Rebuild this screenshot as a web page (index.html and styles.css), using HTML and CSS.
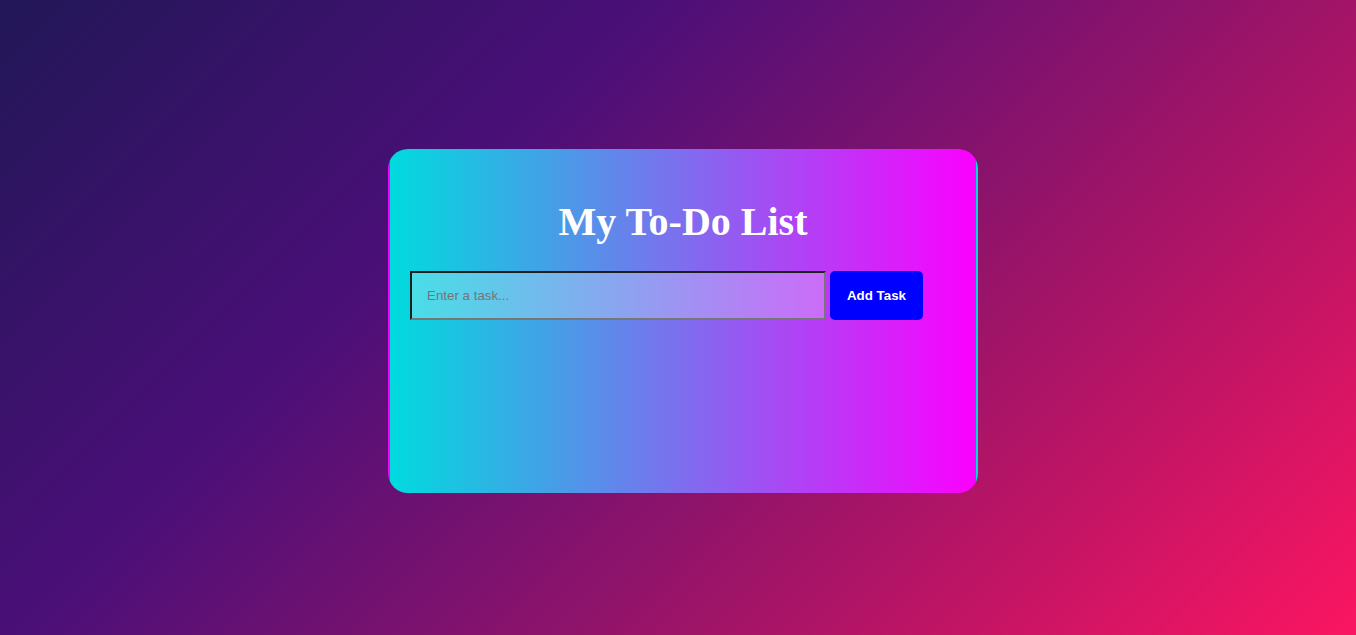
FILE: index.html
```html
<!DOCTYPE html>
<html lang="en">
<head>
<meta charset="UTF-8">
<title>My To-Do List</title>
<link rel="stylesheet" href="styles.css">
</head>
<body>
  <div class="card">
    <h1 class="title">My To-Do List</h1>
    <div class="entry">
      <input class="task-input" type="text" placeholder="Enter a task...">
      <button class="add-btn">Add Task</button>
    </div>
    <ul class="task-list"></ul>
  </div>
</body>
</html>
```

FILE: styles.css
```css
* {
  box-sizing: border-box;
}

html, body {
  margin: 0;
  height: 100%;
}

body {
  display: flex;
  justify-content: center;
  align-items: center;
  padding: 7px 0 0 10px;
  background: linear-gradient(135deg, #211757 0%, #4b0f78 33%, #9d1468 66%, #fb1561 100%);
  font-family: "Liberation Serif", "Times New Roman", serif;
}

.card {
  box-sizing: content-box;
  width: 546px;
  min-height: 300px;
  padding: 20px;
  border: 2px solid transparent;
  border-radius: 20px;
  background: linear-gradient(to right, #00dbde, #fc00ff);
}

.title {
  margin: 26.8px 0 25.8px;
  font-size: 40px;
  font-weight: bold;
  color: #ffffff;
  text-align: center;
}

.entry {
  display: flex;
  gap: 4px;
}

.task-input {
  width: 416px;
  height: 49px;
  padding: 0 15px;
  border-width: 2px;
  border-style: solid;
  border-color: #1e1e1e #767676 #767676 #1e1e1e;
  background: rgba(255, 255, 255, 0.26);
  font-family: "Liberation Sans", Arial, sans-serif;
  font-size: 13.33px;
  color: #222;
  outline: none;
}

.task-input::placeholder {
  color: #757575;
}

.add-btn {
  width: 93px;
  height: 49px;
  padding: 0;
  border: none;
  border-radius: 5px;
  background: #0000ff;
  color: #ffffff;
  font-family: "Liberation Sans", Arial, sans-serif;
  font-size: 13.33px;
  font-weight: bold;
  cursor: pointer;
}

.task-list {
  margin: 0;
  padding: 0;
  list-style: none;
}
```
